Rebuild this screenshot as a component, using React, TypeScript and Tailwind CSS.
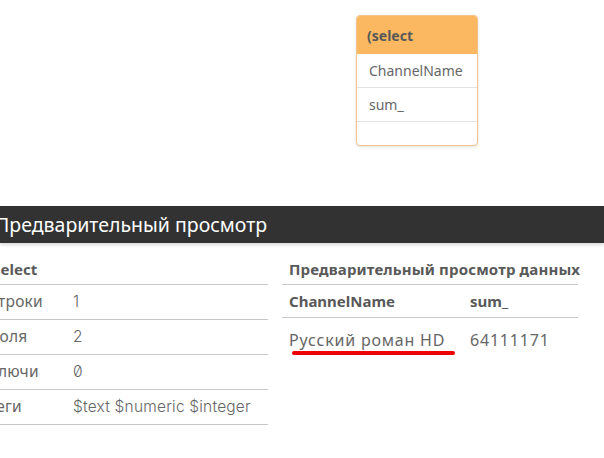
import React from 'react';

const SUMMARY = [
  { label: 'Строки', value: '1' },
  { label: 'Поля', value: '2' },
  { label: 'Ключи', value: '0' },
  { label: 'Теги', value: '$text $numeric $integer' },
];

const FIELDS = ['ChannelName', 'sum_'];

const App: React.FC = () => {
  return (
    <div
      className="w-[604px] h-[458px] overflow-hidden bg-white text-[#666]"
      style={{ fontFamily: '"Noto Sans", "Open Sans", sans-serif' }}
    >
      {/* data model canvas */}
      <div className="relative h-[206px]">
        <div className="absolute left-[356px] top-[15px] w-[122px] rounded-[4px] border border-[#f1c48a] bg-white shadow-[0_1px_3px_rgba(0,0,0,0.12)] overflow-hidden">
          <div className="h-[38px] bg-[#fbb861] flex items-center px-[10px] text-[14px] font-bold text-[#595959]">
            (select
          </div>
          {FIELDS.map((f) => (
            <div key={f} className="h-[34px] flex items-center px-[12px] border-b border-[#e2e2e2] text-[14px] text-[#666]">
              {f}
            </div>
          ))}
          <div className="h-[23px]" />
        </div>
      </div>

      {/* preview header */}
      <div className="h-[37px] bg-[#323232] flex items-center shadow-[0_2px_3px_rgba(0,0,0,0.15)]">
        <span className="ml-[-5px] text-[19.5px] text-white">Предварительный просмотр</span>
      </div>

      <div className="flex">
        {/* table summary */}
        <div className="ml-[-12px] w-[280px]">
          <div className="h-[42px] flex items-end pb-[4px] border-b border-[#c8c8c8] text-[15px] font-bold text-[#595959]">
            (select
          </div>
          {SUMMARY.map((r) => (
            <div key={r.label} className="h-[35px] flex items-center border-b border-[#c8c8c8] text-[15.5px] tracking-[0.2px]">
              <span className="w-[85px]">{r.label}</span>
              <span className="font-['Inter'] font-light slashed-zero">{r.value}</span>
            </div>
          ))}
        </div>

        {/* data preview */}
        <div className="ml-[14px] w-[296px]">
          <div className="h-[42px] flex items-end pb-[4px] px-[7px] border-b border-[#c8c8c8] text-[15px] tracking-[0.15px] font-bold text-[#595959] whitespace-nowrap">
            Предварительный просмотр данных
          </div>
          <div className="h-[33px] flex items-center px-[7px] border-b border-[#c8c8c8] text-[15px] font-bold text-[#595959]">
            <span className="w-[181px]">ChannelName</span>
            <span>sum_</span>
          </div>
          <div className="relative h-[44px] flex items-center px-[7px] text-[16px] tracking-[0.8px]">
            <span className="w-[181px]">Русский роман HD</span>
            <span>64111171</span>
            <div className="absolute left-[10px] top-[33px] w-[163px] h-[4px] rounded-full bg-[#ee0000]" />
          </div>
        </div>
      </div>
    </div>
  );
};

export default App;
